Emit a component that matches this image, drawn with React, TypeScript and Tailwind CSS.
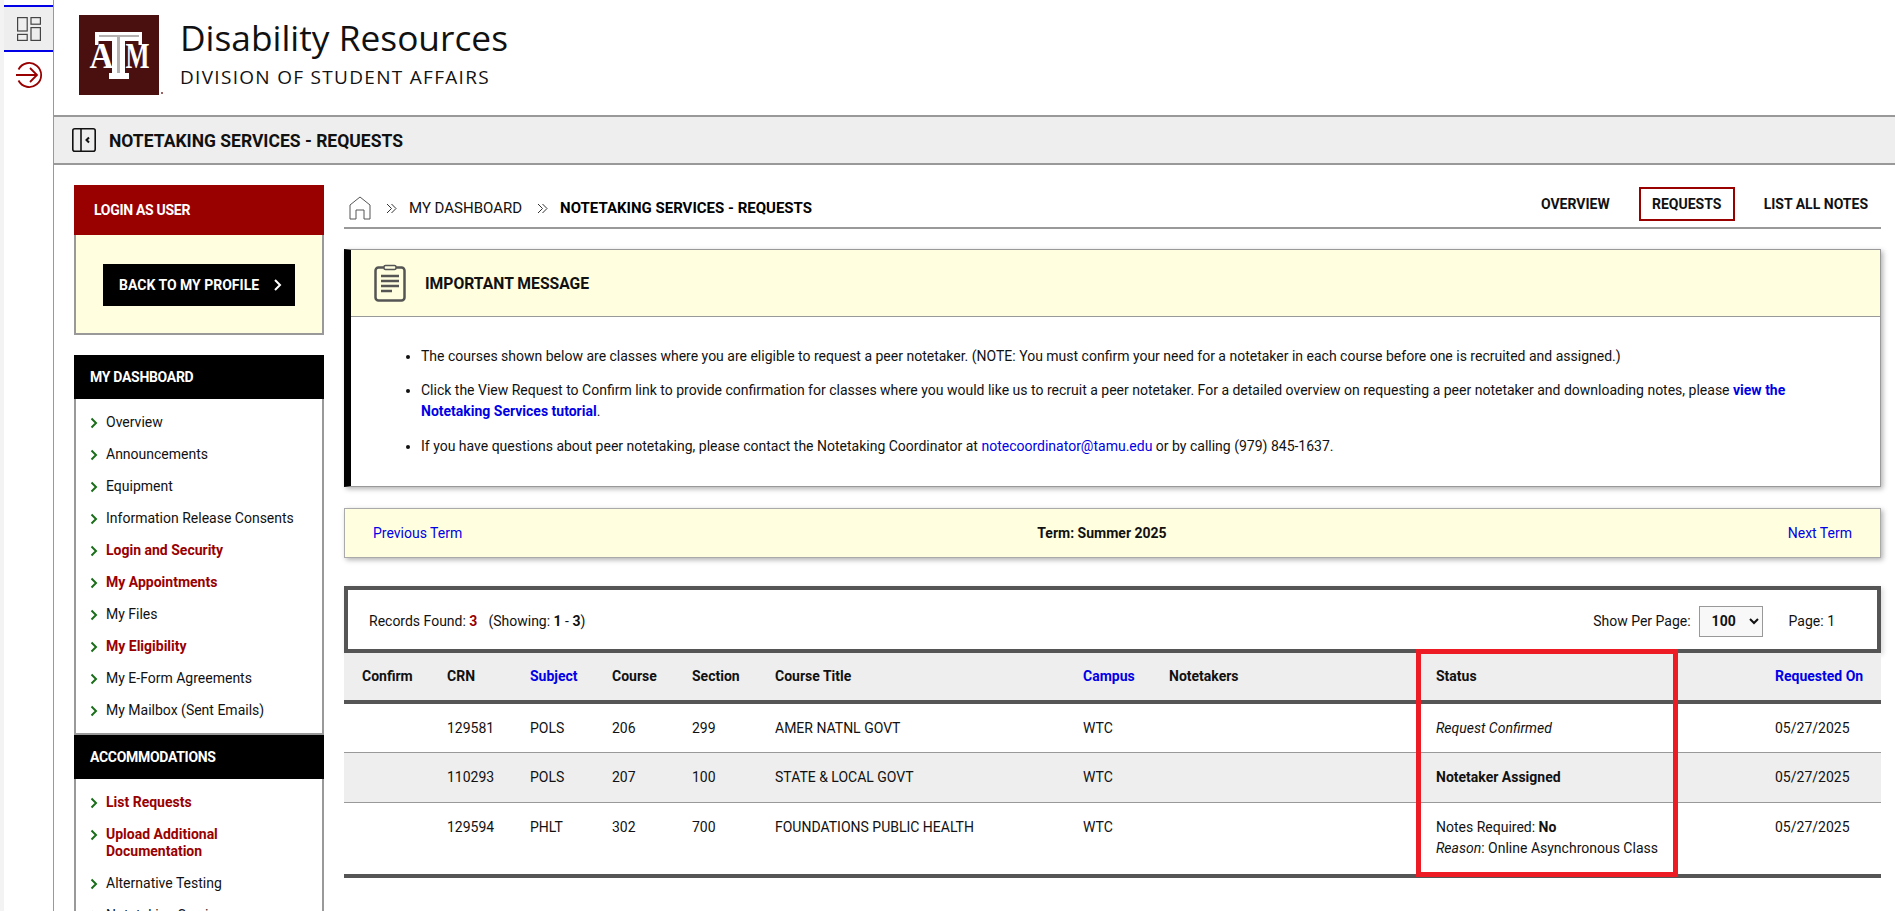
const dashboardLinks = [
  { label: "Overview" },
  { label: "Announcements" },
  { label: "Equipment" },
  { label: "Information Release Consents" },
  { label: "Login and Security", alert: true },
  { label: "My Appointments", alert: true },
  { label: "My Files" },
  { label: "My Eligibility", alert: true },
  { label: "My E-Form Agreements" },
  { label: "My Mailbox (Sent Emails)" },
]

const accommodationLinks = [
  { label: "List Requests", alert: true },
  { label: "Upload Additional Documentation", alert: true },
  { label: "Alternative Testing" },
  { label: "Notetaking Services" },
]

function Chevron() {
  return (
    <svg viewBox="0 0 8 12" className="mt-[3px] h-[12px] w-[8px] shrink-0">
      <path d="M1.5 1.5 6 6l-4.5 4.5" fill="none" stroke="#1a6e1a" strokeWidth="2" />
    </svg>
  )
}

function DoubleChevron() {
  return (
    <svg viewBox="0 0 11 11" className="ml-[15px] mr-[12px] h-[11px] w-[11px] shrink-0" fill="none" stroke="#333" strokeWidth="1">
      <path d="M1 1l4.500 4.500L1 10M5.500 1 10 5.500 5.500 10" />
    </svg>
  )
}

function NavLinks({ links }: { links: { label: string; alert?: boolean }[] }) {
  return (
    <ul className="flex flex-col gap-[15px] border-x-2 border-b-2 border-[#999] pt-[15px] pb-[14px] pr-[20px] pl-[14px]">
      {links.map((link) => (
        <li key={link.label} className="flex gap-[8px] text-[14px] leading-[17px]">
          <Chevron />
          <span className={link.alert ? "font-bold text-[#990000]" : "text-[#111]"}>{link.label}</span>
        </li>
      ))}
    </ul>
  )
}

function Logo() {
  return (
    <svg viewBox="0 0 84 80" className="h-[80px] w-[84px] shrink-0">
      <rect width="80" height="80" fill="#4a1010" />
      <path d="M16 17h47v13h-3.500v-4H46v32h4v6H30v-6h3V26H19.500v4H16z" fill="#fff" />
      <path d="M38 22h3v36h-3zM20 20h40v2H20z" fill="#b5b1b1" />
      <text x="22.500" y="53" textAnchor="middle" fontFamily="'Liberation Serif', serif" fontWeight="700" fontSize="35" textLength="24" lengthAdjust="spacingAndGlyphs" fill="#fff">A</text>
      <text x="58.500" y="53" textAnchor="middle" fontFamily="'Liberation Serif', serif" fontWeight="700" fontSize="35" textLength="24" lengthAdjust="spacingAndGlyphs" fill="#fff">M</text>
      <circle cx="83" cy="78" r="1" fill="#7a3030" />
    </svg>
  )
}

function SectionTitle({ children }: { children: string }) {
  return (
    <div className="flex h-[44px] items-center bg-black pl-[16px] text-[14px] font-bold tracking-[-0.3px] text-white">{children}</div>
  )
}

export default function App() {
  return (
    <div className="flex h-[911px] overflow-hidden bg-white font-['Roboto',sans-serif] text-[14px] text-[#111]">
      <div className="w-[54px] shrink-0 border-r border-[#999] border-l-4 border-l-[#f3f3f3] pt-[5px]">
        <div className="flex h-[47px] items-center justify-center border-y-2 border-[#0000e6] bg-[#eee]">
          <svg viewBox="0 0 24 24" className="h-[24px] w-[24px]" fill="none" stroke="#444" strokeWidth="1.2">
            <rect x="0.6" y="0.6" width="9.6" height="13.4" />
            <rect x="14" y="0.6" width="9.4" height="6.6" />
            <rect x="0.6" y="17.4" width="9.6" height="6" />
            <rect x="14" y="10.6" width="9.4" height="12.8" />
          </svg>
        </div>
        <div className="flex justify-center pt-[9px]">
          <svg viewBox="0 0 28 28" className="h-[28px] w-[28px]" fill="none" stroke="#990000" strokeWidth="1.8">
            <path d="M3.5 8.5a12 12 0 1 1 0 11" />
            <path d="M1 14h21M15 7l7 7-7 7" />
          </svg>
        </div>
      </div>

      <div className="flex min-w-0 flex-1 flex-col">
        <header className="flex h-[115px] shrink-0 items-start pl-[25px] pt-[15px]">
          <Logo />
          <div className="pl-[17px]">
            <div className="mt-[-3px] font-['Open_Sans',sans-serif] text-[35.3px] leading-[50px] text-[#111]">Disability Resources</div>
            <div className="mt-[3px] font-['Open_Sans',sans-serif] text-[19px] font-medium leading-[25px] tracking-[1.3px] text-[#111]">DIVISION OF STUDENT AFFAIRS</div>
          </div>
        </header>

        <div className="flex h-[50px] shrink-0 items-center gap-[13px] border-y-2 border-[#999] bg-[#eee] pl-[18px]">
          <svg viewBox="0 0 24 24" className="h-[24px] w-[24px]" fill="none" stroke="#111" strokeWidth="1.6">
            <rect x="0.8" y="0.8" width="22.4" height="22.4" rx="2" />
            <path d="M9 1v22" />
            <path d="M17 9.5 14.5 12l2.500 2.500" strokeWidth="2" />
          </svg>
          <h1 className="mt-[3px] text-[17.5px] font-bold">NOTETAKING SERVICES - REQUESTS</h1>
        </div>

        <div className="flex min-h-0 flex-1 gap-[20px] pl-[20px] pr-[14px] pt-[20px]">
          <aside className="w-[250px] shrink-0">
            <div className="flex h-[50px] items-center bg-[#990000] pl-[20px] text-[14px] font-bold tracking-[-0.3px] text-white">LOGIN AS USER</div>
            <div className="flex h-[100px] items-start justify-center border-x-2 border-b-2 border-[#999] bg-[#ffffdf] pt-[29px]">
              <div className="flex h-[42px] w-[192px] items-center bg-black pl-[16px] text-[14px] font-bold text-white">
                BACK TO MY PROFILE
                <svg viewBox="0 0 10 14" className="ml-[14px] h-[14px] w-[10px]">
                  <path d="M2 2l5 5-5 5" fill="none" stroke="#fff" strokeWidth="2" />
                </svg>
              </div>
            </div>
            <div className="mt-[20px]">
              <SectionTitle>MY DASHBOARD</SectionTitle>
              <NavLinks links={dashboardLinks} />
              <SectionTitle>ACCOMMODATIONS</SectionTitle>
              <NavLinks links={accommodationLinks} />
            </div>
          </aside>

          <main className="min-w-0 flex-1">
            <div className="flex h-[44px] items-start justify-between border-b-2 border-[#999]">
              <div className="flex items-center pl-[5px] pt-[11px]">
                <svg viewBox="0 0 22 24" className="h-[24px] w-[22px]" fill="none" stroke="#555" strokeWidth="1">
                  <path d="M1 23V9l10-8 10 8v14h-6v-9H7v9z" />
                </svg>
                <DoubleChevron />
                <span className="text-[15px]">MY DASHBOARD</span>
                <DoubleChevron />
                <span className="text-[15px] font-bold text-black">NOTETAKING SERVICES - REQUESTS</span>
              </div>
              <nav className="flex items-center pt-[2px] pr-[13px] text-[14px] font-bold">
                <a className="mr-[29px]">OVERVIEW</a>
                <a className="mr-[29px] flex h-[34px] w-[96px] items-center justify-center border-2 border-[#990000]">REQUESTS</a>
                <a>LIST ALL NOTES</a>
              </nav>
            </div>

            <section className="mt-[20px] h-[238px] border border-l-[7px] border-[#999] border-l-black shadow-[2px_2px_5px_rgba(0,0,0,0.3)]">
              <div className="flex h-[67px] items-center border-b border-[#999] bg-[#ffffdf] pl-[23px]">
                <svg viewBox="0 0 32 38" className="h-[38px] w-[32px]" fill="none" stroke="#555" strokeWidth="2.500">
                  <rect x="1.500" y="3.500" width="29" height="33" rx="3" />
                  <rect x="10" y="1.500" width="12" height="4" rx="1.500" strokeWidth="1.500" fill="#ffffdf" />
                  <path d="M7 12h18M7 17h18M7 22h18M7 27h11" />
                </svg>
                <h2 className="ml-[19px] mt-[1px] text-[15.7px] font-bold">IMPORTANT MESSAGE</h2>
              </div>
              <ul className="list-disc pl-[70px] pr-[64px] pt-[29px] leading-[21px]">
                <li>The courses shown below are classes where you are eligible to request a peer notetaker. (NOTE: You must confirm your need for a notetaker in each course before one is recruited and assigned.)</li>
                <li className="mt-[13px]">
                  Click the View Request to Confirm link to provide confirmation for classes where you would like us to recruit a peer notetaker. For a detailed overview on requesting a peer notetaker and downloading notes, please{" "}
                  <a className="font-bold text-[#0000e6]">view the Notetaking Services tutorial</a>.
                </li>
                <li className="mt-[14px]">
                  If you have questions about peer notetaking, please contact the Notetaking Coordinator at{" "}
                  <a className="text-[#0000e6]">notecoordinator@tamu.edu</a> or by calling (979) 845-1637.
                </li>
              </ul>
            </section>

            <div className="mt-[21px] flex h-[50px] items-center justify-between border border-[#aaa] bg-[#ffffdf] pl-[28px] pr-[28px] shadow-[2px_2px_5px_rgba(0,0,0,0.3)]">
              <a className="text-[#0000e6]">Previous Term</a>
              <span className="mr-[46px] font-bold">Term: Summer 2025</span>
              <a className="text-[#0000e6]">Next Term</a>
            </div>

            <div className="mt-[28px] flex h-[67px] items-center justify-between border-4 border-[#555] pl-[21px] pr-[42px] pt-[3px] shadow-[2px_2px_5px_rgba(0,0,0,0.15)]">
              <span>
                Records Found: <b className="text-[#990000]">3</b>
                <span className="ml-[11px]">(Showing: <b>1</b> - <b>3</b>)</span>
              </span>
              <div className="flex items-center">
                <span>Show Per Page:</span>
                <select defaultValue="100" className="ml-[8px] h-[31px] w-[64px] border border-[#999] bg-[#f8f8f8] pl-[8px] font-bold">
                  <option>100</option>
                </select>
                <span className="ml-[26px]">Page: 1</span>
              </div>
            </div>

            <div className="relative">
              <table className="w-full table-fixed border-collapse text-left">
                <colgroup>
                  <col className="w-[85px]" />
                  <col className="w-[83px]" />
                  <col className="w-[82px]" />
                  <col className="w-[80px]" />
                  <col className="w-[83px]" />
                  <col className="w-[308px]" />
                  <col className="w-[86px]" />
                  <col className="w-[267px]" />
                  <col className="w-[339px]" />
                  <col className="w-[124px]" />
                </colgroup>
                <thead>
                  <tr className="h-[49px] border-b-4 border-[#555] bg-[#eee] font-bold [&_th]:pl-[18px] [&_th]:font-bold">
                    <th>Confirm</th>
                    <th>CRN</th>
                    <th className="text-[#0000e6]">Subject</th>
                    <th>Course</th>
                    <th>Section</th>
                    <th>Course Title</th>
                    <th className="text-[#0000e6]">Campus</th>
                    <th>Notetakers</th>
                    <th>Status</th>
                    <th className="text-[#0000e6]">Requested On</th>
                  </tr>
                </thead>
                <tbody className="[&_td]:pl-[18px] [&_td]:align-top [&_td]:pt-[14px]">
                  <tr className="h-[50px] border-b border-[#999]">
                    <td></td>
                    <td>129581</td>
                    <td>POLS</td>
                    <td>206</td>
                    <td>299</td>
                    <td>AMER NATNL GOVT</td>
                    <td>WTC</td>
                    <td></td>
                    <td><i>Request Confirmed</i></td>
                    <td>05/27/2025</td>
                  </tr>
                  <tr className="h-[50px] border-b border-[#999] bg-[#eee]">
                    <td></td>
                    <td>110293</td>
                    <td>POLS</td>
                    <td>207</td>
                    <td>100</td>
                    <td>STATE &amp; LOCAL GOVT</td>
                    <td>WTC</td>
                    <td></td>
                    <td><b>Notetaker Assigned</b></td>
                    <td>05/27/2025</td>
                  </tr>
                  <tr className="h-[74px] border-b-4 border-[#555]">
                    <td></td>
                    <td>129594</td>
                    <td>PHLT</td>
                    <td>302</td>
                    <td>700</td>
                    <td>FOUNDATIONS PUBLIC HEALTH</td>
                    <td>WTC</td>
                    <td></td>
                    <td className="leading-[21px]">
                      Notes Required: <b>No</b>
                      <br />
                      <i>Reason</i>: Online Asynchronous Class
                    </td>
                    <td>05/27/2025</td>
                  </tr>
                </tbody>
              </table>
              <div className="absolute left-[1072px] top-[-4px] h-[228px] w-[262px] border-[5px] border-[#ed1c24]"></div>
            </div>
          </main>
        </div>
      </div>
    </div>
  )
}
